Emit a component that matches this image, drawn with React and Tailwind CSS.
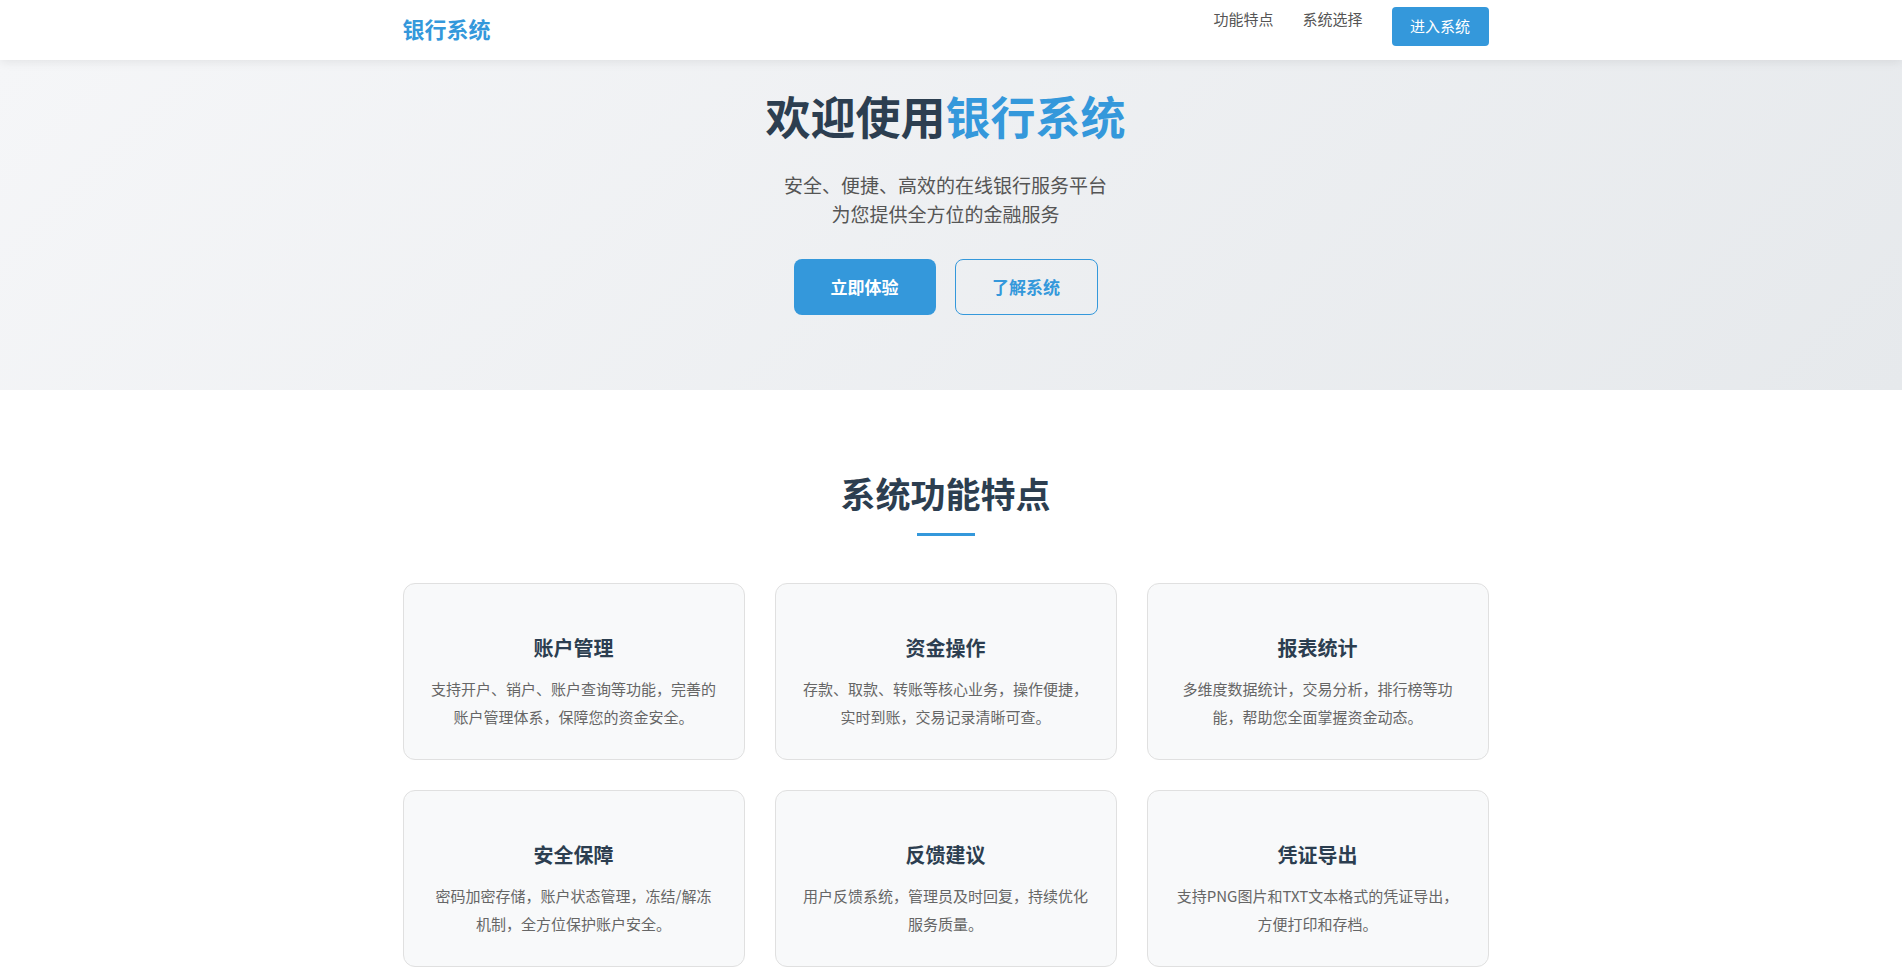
import React from "react";

const features = [
  { title: "账户管理", desc: "支持开户、销户、账户查询等功能，完善的账户管理体系，保障您的资金安全。" },
  { title: "资金操作", desc: "存款、取款、转账等核心业务，操作便捷，实时到账，交易记录清晰可查。" },
  { title: "报表统计", desc: "多维度数据统计，交易分析，排行榜等功能，帮助您全面掌握资金动态。" },
  { title: "安全保障", desc: "密码加密存储，账户状态管理，冻结/解冻机制，全方位保护账户安全。" },
  { title: "反馈建议", desc: "用户反馈系统，管理员及时回复，持续优化服务质量。" },
  { title: "凭证导出", desc: "支持PNG图片和TXT文本格式的凭证导出，方便打印和存档。" },
];

const font = { fontFamily: '"Noto Sans CJK SC", "Noto Sans", sans-serif' };

export default function App() {
  return (
    <div className="min-h-[975px] bg-white text-[#333]" style={font}>
      <header className="relative z-10 h-[60px] bg-white pr-[11px] shadow-[0_2px_10px_rgba(0,0,0,0.08)]">
        <div className="mx-auto flex h-full w-[1086px] items-center justify-between">
          <div className="mt-[-4px] text-[22px] font-bold text-[#3498db]">银行系统</div>
          <nav className="flex items-center">
            <a className="mb-[22px] text-[15px] text-[#555]">功能特点</a>
            <a className="mb-[22px] ml-[29px] text-[15px] text-[#555]">系统选择</a>
            <button className="ml-[29px] mt-[-7px] h-[39px] w-[97px] rounded-[4px] bg-[#3498db] text-[15px] text-white">
              进入系统
            </button>
          </nav>
        </div>
      </header>

      <section className="h-[330px] bg-[linear-gradient(135deg,#f5f6f8_0%,#e6e9ec_100%)] pr-[11px] pt-[26px]">
        <div className="flex flex-col items-center">
          <h1 className="text-[45px] font-bold leading-[60px] text-[#2c3e50]">
            欢迎使用<span className="text-[#3498db]">银行系统</span>
          </h1>
          <p className="mt-[24px] text-center text-[19px] leading-[29px] text-[#555]">
            安全、便捷、高效的在线银行服务平台
            <br />
            为您提供全方位的金融服务
          </p>
          <div className="mt-[31px] flex gap-[19px]">
            <button className="h-[56px] w-[142px] rounded-[8px] bg-[#3498db] text-[17px] font-bold text-white">
              立即体验
            </button>
            <button className="h-[56px] w-[143px] rounded-[8px] border border-[#3498db] bg-transparent text-[17px] font-bold text-[#3498db]">
              了解系统
            </button>
          </div>
        </div>
      </section>

      <section className="pr-[11px] pt-[79px]">
        <div className="mx-auto w-[1086px]">
          <h2 className="text-center text-[35px] font-bold leading-[48px] text-[#2c3e50]">系统功能特点</h2>
          <div className="mx-auto mt-[16px] h-[3px] w-[58px] bg-[#3498db]" />
          <div className="mt-[47px] grid grid-cols-3 gap-[30px]">
            {features.map((f) => (
              <div
                key={f.title}
                className="h-[177px] rounded-[12px] border border-[#e0e0e0] bg-[#f8f9fa] px-[27px] pt-[49px] text-center"
              >
                <h3 className="text-[20px] font-bold leading-[30px] text-[#2c3e50]">{f.title}</h3>
                <p className="mt-[12px] text-[15px] leading-[28px] text-[#666]">{f.desc}</p>
              </div>
            ))}
          </div>
        </div>
      </section>
    </div>
  );
}
